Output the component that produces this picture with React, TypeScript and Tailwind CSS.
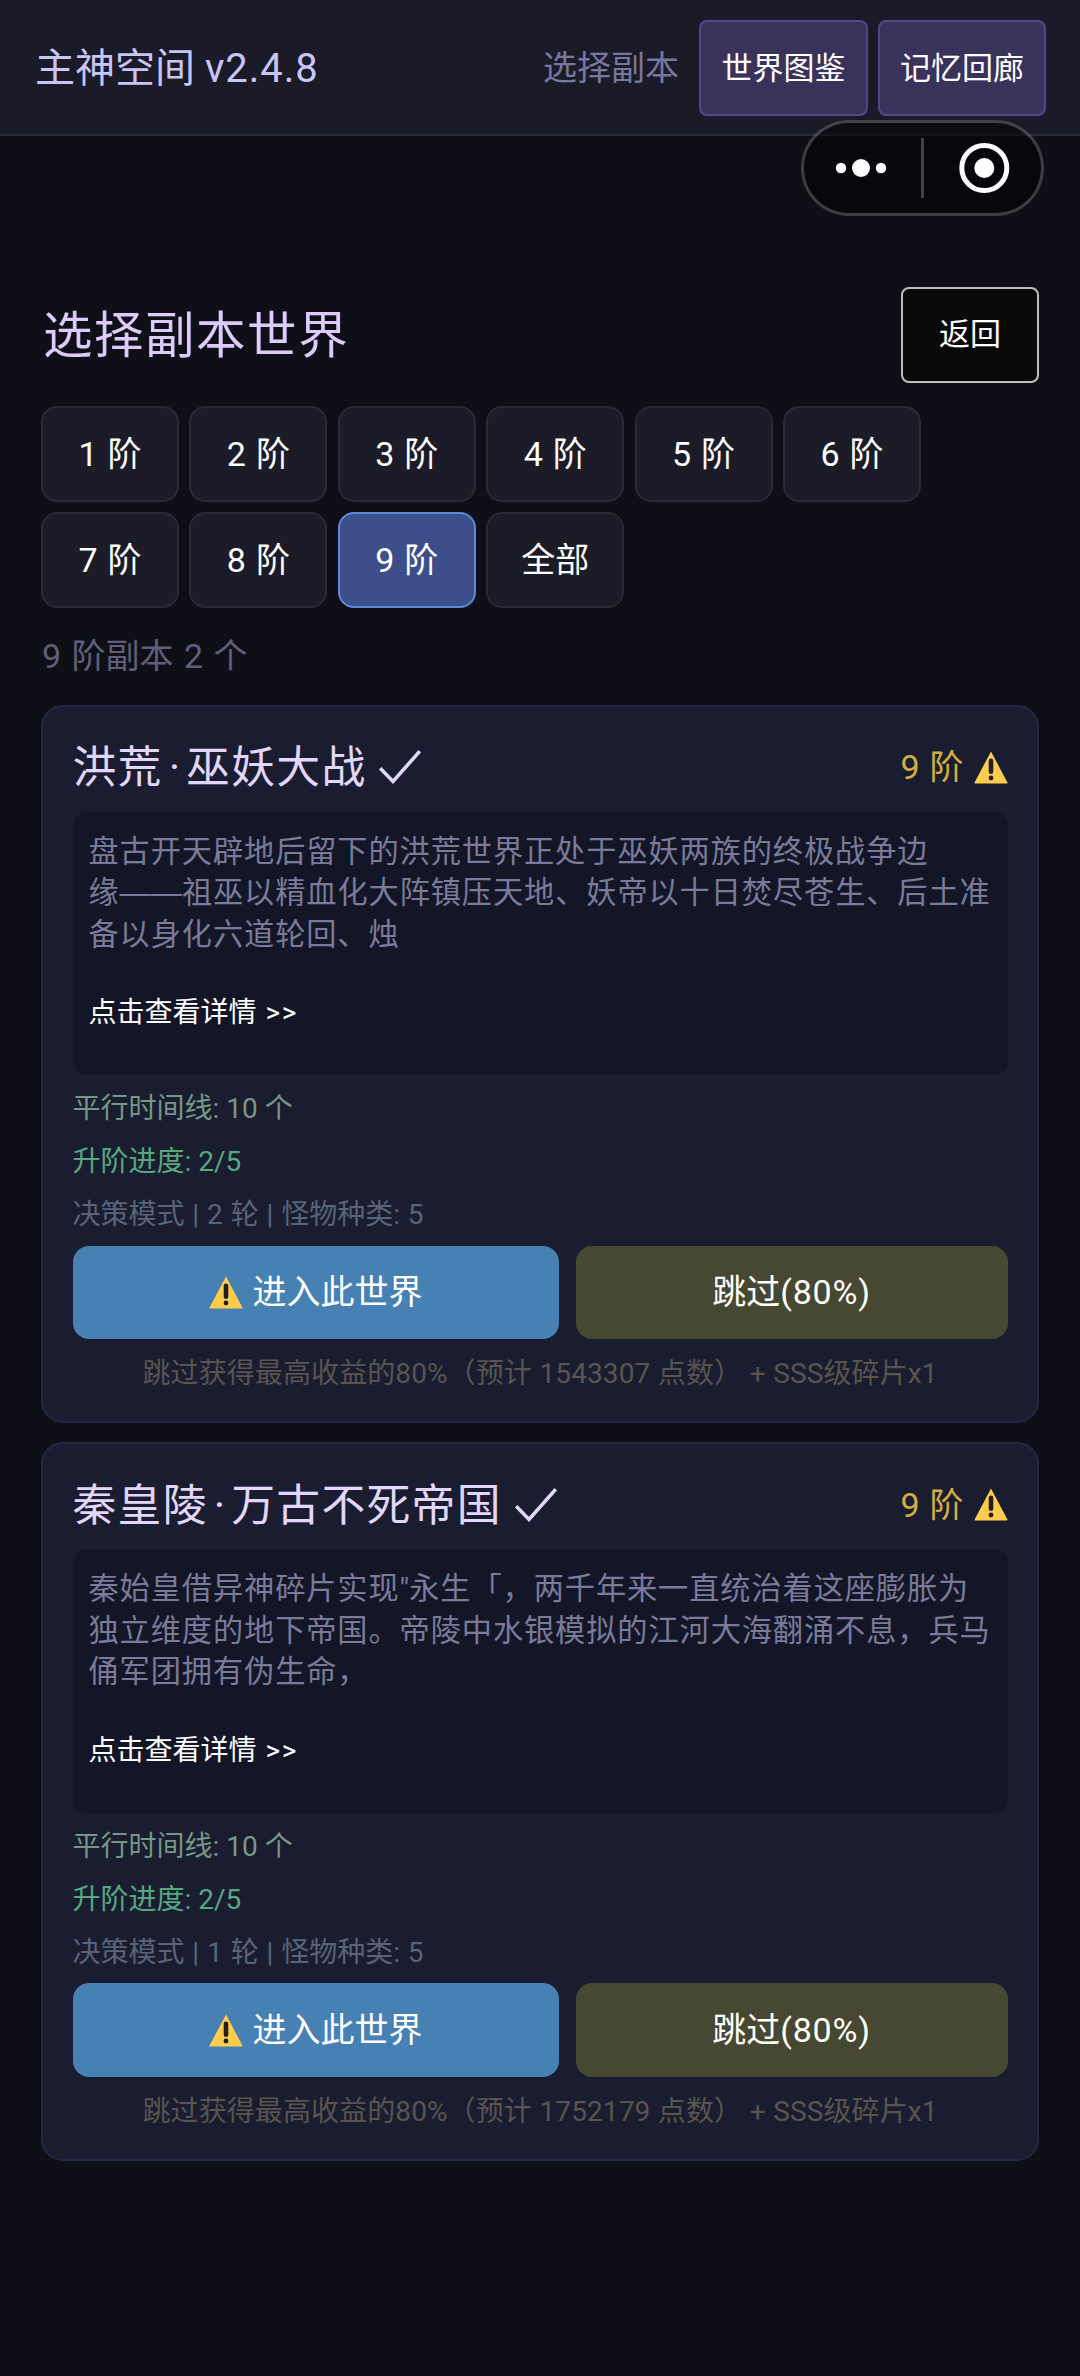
import clsx from 'clsx'

interface World {
  name: [string, string]
  tier: number
  lines: string[]
  timelines: number
  progress: string
  rounds: number
  monsters: number
  points: number
}

const TIERS = ['1 阶', '2 阶', '3 阶', '4 阶', '5 阶', '6 阶', '7 阶', '8 阶', '9 阶', '全部']
const ACTIVE_TIER = '9 阶'

const WORLDS: World[] = [
  {
    name: ['洪荒', '巫妖大战'],
    tier: 9,
    lines: [
      '盘古开天辟地后留下的洪荒世界正处于巫妖两族的终极战争边',
      '缘——祖巫以精血化大阵镇压天地、妖帝以十日焚尽苍生、后土准',
      '备以身化六道轮回、烛',
    ],
    timelines: 10,
    progress: '2/5',
    rounds: 2,
    monsters: 5,
    points: 1543307,
  },
  {
    name: ['秦皇陵', '万古不死帝国'],
    tier: 9,
    lines: [
      '秦始皇借异神碎片实现"永生「，两千年来一直统治着这座膨胀为',
      '独立维度的地下帝国。帝陵中水银模拟的江河大海翻涌不息，兵马',
      '俑军团拥有伪生命，',
    ],
    timelines: 10,
    progress: '2/5',
    rounds: 1,
    monsters: 5,
    points: 1752179,
  },
]

function WarningIcon({ className }: { className?: string }) {
  return (
    <svg viewBox="0 0 34 33" className={className}>
      <path d="M17 .4 33.4 31.6q.4 1-.7 1H1.3q-1.1 0-.7-1Z" fill="#ffcc4d" />
      <rect x="14.7" y="7.5" width="4.6" height="15.5" rx="2.3" fill="#231f20" />
      <circle cx="17" cy="27" r="2.4" fill="#231f20" />
    </svg>
  )
}

function CheckIcon() {
  return (
    <svg viewBox="0 0 42 34" className="ml-[13px] h-[34px] w-[42px]" fill="none" stroke="#e2d6fb" strokeWidth="3.6">
      <path d="M1.2 18.2 14 31.4 40.8 1.2" />
    </svg>
  )
}

function Header() {
  return (
    <header className="flex h-[136px] items-center border-b-2 border-[#2a2a3d] bg-[#1b1a27] pt-[2px] pr-[34px] pl-[35px]">
      <h1 className="pt-[2px] text-[40px] leading-none text-[#c9c5fb]">
        主神空间 <span className="tracking-[1px]">v2.4.8</span>
      </h1>
      <span className="ml-auto text-[34px] leading-none text-[#7877a0]">选择副本</span>
      <button className="ml-[20px] h-24 w-[169px] rounded-lg border-2 border-[#51478a] bg-[#39335b] pt-[2px] text-[31px] text-white">
        世界图鉴
      </button>
      <button className="ml-[10px] h-24 w-[168px] rounded-lg border-2 border-[#51478a] bg-[#39335b] pt-[2px] text-[31px] text-white">
        记忆回廊
      </button>
    </header>
  )
}

// Host app menu, floats over the page
function Capsule() {
  return (
    <div className="absolute top-[120px] left-[801px] flex h-24 w-[243px] items-center rounded-full border-[3px] border-white/22 bg-black/50">
      <svg viewBox="0 0 237 90" className="h-[90px] w-[237px]" fill="#fff">
        <circle cx="37" cy="45" r="5.2" />
        <circle cx="57" cy="45" r="9" />
        <circle cx="77" cy="45" r="5.2" />
        <rect x="117" y="15" width="3" height="60" opacity=".24" />
        <circle cx="180.3" cy="45" r="22.5" fill="none" stroke="#fff" strokeWidth="5" />
        <circle cx="180.3" cy="45" r="10" />
      </svg>
    </div>
  )
}

function Line({ text }: { text: string }) {
  return (
    <span className="block h-[41.7px]">
      {text.split(/(——|")/).map((part, i) => {
        if (part === '——') {
          return <span key={i} className="font-['Liberation_Sans',sans-serif] text-[31.15px] leading-none tracking-normal">{part}</span>
        }
        if (part === '"') {
          return <span key={i} className="font-[Roboto,sans-serif] leading-none tracking-normal">{part}</span>
        }
        return part
      })}
    </span>
  )
}

function WorldCard({ world }: { world: World }) {
  return (
    <div className="h-[718.5px] rounded-[22px] border-2 border-[#232844] bg-[#191d2f] px-[29.5px] pt-[30px]">
      <div className="flex h-[61px] items-center">
        <h3 className="flex pt-[4px] text-[43.8px] leading-none tracking-[1.3px] text-[#e2d6fb]">
          {world.name[0]}
          <span className="w-[23.4px] text-center tracking-normal">·</span>
          {world.name[1]}
        </h3>
        <CheckIcon />
        <span className="ml-auto text-[34px] leading-none text-[#d4ad41] [word-spacing:1.5px]">{world.tier} 阶</span>
        <WarningIcon className="ml-[10px] h-[33px] w-[34px]" />
      </div>

      <div className="mt-[14px] h-[263.5px] rounded-[14px] bg-[#121627] px-4 pt-[17px]">
        <p className="font-['Noto_Sans_CJK_SC',sans-serif] text-[30.2px] leading-[41.7px] tracking-[0.92px] whitespace-nowrap text-[#7b7a99] [text-spacing-trim:space-all]">
          {world.lines.map((line) => (
            <Line key={line} text={line} />
          ))}
        </p>
        <a className="mt-[38.5px] block text-[28px] leading-[41.7px] text-white [word-spacing:2px]">
          点击查看详情 <span className="tracking-[1.6px]">&gt;&gt;</span>
        </a>
      </div>

      <div className="mt-[7px] text-[28px] leading-[53px]">
        <p className="text-[#769787]">平行时间线: {world.timelines} 个</p>
        <p className="text-[#56a881]">升阶进度: {world.progress}</p>
        <p className="text-[#586479] [word-spacing:0.9px]">
          决策模式 | {world.rounds} 轮 | 怪物种类: {world.monsters}
        </p>
      </div>

      <div className="mt-[4.5px] flex h-[93.5px] gap-[17px] text-[34px] text-white">
        <button className="flex w-[486px] items-center justify-center rounded-2xl bg-[#4781b3] pt-px">
          <WarningIcon className="mr-[10px] h-[33px] w-[34px]" />
          进入此世界
        </button>
        <button className="flex-1 rounded-2xl bg-[#474831] pt-px">
          跳过<span className="tracking-[0.8px]">(80%)</span>
        </button>
      </div>

      <p className="mt-[9px] text-center text-[28px] leading-[52px] tracking-[0.1px] whitespace-nowrap text-[#59544f] [text-spacing-trim:space-all] [word-spacing:0.5px]">
        跳过获得最高收益的80%（预计 {world.points} 点数） + SSS级碎片x1
      </p>
    </div>
  )
}

export default function App() {
  return (
    <div className="relative h-[2376px] w-[1080px] bg-[#0f0f18] font-[Roboto,'Noto_Sans_CJK_SC',sans-serif]">
      <Header />
      <Capsule />

      <main className="px-[41px] pt-[150.5px]">
        <div className="flex h-[96.5px] items-center justify-between">
          <h2 className="pt-[4px] pl-[2px] text-[49.5px] leading-none tracking-[1.53px] text-[#dccbfc]">选择副本世界</h2>
          <button className="h-full w-[138px] rounded-lg border-2 border-[#bdbdbd] bg-[#0a0a0a] pt-px text-[31px] text-white">
            返回
          </button>
        </div>

        <div className="mt-[23px] flex flex-wrap gap-x-[10.4px] gap-y-[10px]">
          {TIERS.map((tier) => (
            <button
              key={tier}
              className={clsx(
                'h-24 w-[138px] rounded-2xl border-2 text-[34px] text-white [word-spacing:1.5px]',
                tier === ACTIVE_TIER ? 'border-[#6088d6] bg-[#3c4f8a]' : 'border-[#292938] bg-[#1c1b28]',
              )}
            >
              {tier}
            </button>
          ))}
        </div>

        <p className="mt-[24px] pl-[1px] text-[34px] leading-[48px] text-[#605f79] [word-spacing:2px]">
          9 阶副本 {WORLDS.length} 个
        </p>

        <div className="mt-[24.5px] flex flex-col gap-[19px]">
          {WORLDS.map((world) => (
            <WorldCard key={world.name[0]} world={world} />
          ))}
        </div>
      </main>
    </div>
  )
}
